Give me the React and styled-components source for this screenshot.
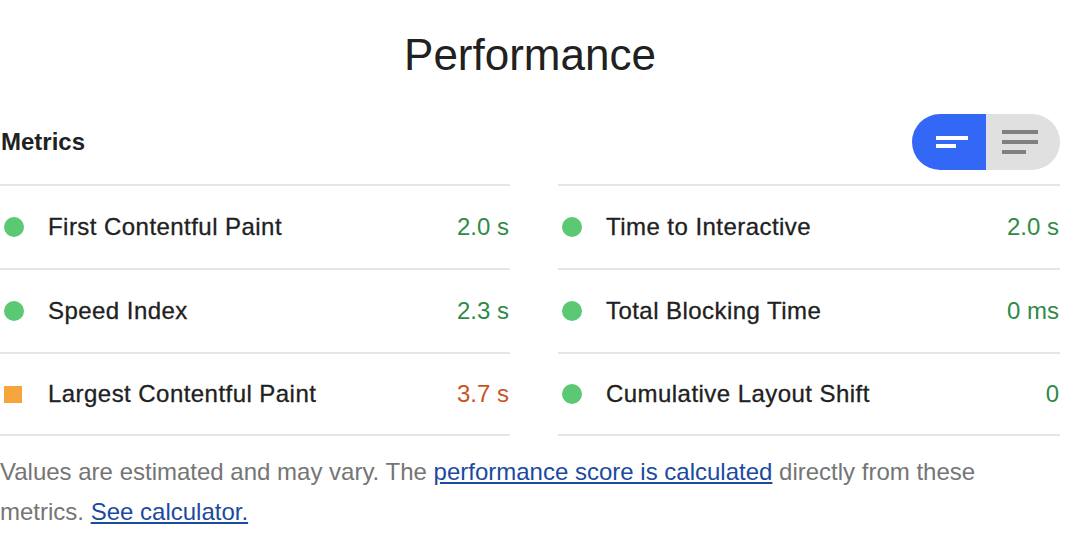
import React from 'react'
import styled, { createGlobalStyle } from 'styled-components'

const GlobalStyle = createGlobalStyle`
  body {
    margin: 0;
    background: #fff;
    font-family: "Liberation Sans", Arial, Helvetica, sans-serif;
    color: #212121;
  }
`

const metrics = [
  { title: 'First Contentful Paint', value: '2.0 s', rating: 'pass' },
  { title: 'Time to Interactive', value: '2.0 s', rating: 'pass' },
  { title: 'Speed Index', value: '2.3 s', rating: 'pass' },
  { title: 'Total Blocking Time', value: '0 ms', rating: 'pass' },
  { title: 'Largest Contentful Paint', value: '3.7 s', rating: 'average' },
  { title: 'Cumulative Layout Shift', value: '0', rating: 'pass' },
]

const valueColors = {
  pass: '#2f8a48',
  average: '#c9531f',
}

const Metric = ({ item }) => (
  <Row>
    {item.rating === 'pass' ? <Dot /> : <Square />}
    <Title>{item.title}</Title>
    <Value $rating={item.rating}>{item.value}</Value>
  </Row>
)

const App = () => (
  <>
    <GlobalStyle />
    <Page>
      <Heading>Performance</Heading>
      <Header>
        <SubTitle>Metrics</SubTitle>
        <Toggle>
          <ToggleHalf $active>
            <svg width="74" height="56" viewBox="0 0 74 56">
              <rect x="24" y="22" width="32" height="4" fill="#fff" />
              <rect x="24" y="30" width="20" height="4" fill="#fff" />
            </svg>
          </ToggleHalf>
          <ToggleHalf>
            <svg width="74" height="56" viewBox="0 0 74 56">
              <rect x="16" y="16" width="36" height="4" fill="#808080" />
              <rect x="16" y="26" width="36" height="4" fill="#808080" />
              <rect x="16" y="36" width="24" height="4" fill="#808080" />
            </svg>
          </ToggleHalf>
        </Toggle>
      </Header>
      <Grid>
        {metrics.map((item) => (
          <Metric key={item.title} item={item} />
        ))}
      </Grid>
      <Footer>
        Values are estimated and may vary. The{' '}
        <Link href="#">performance score is calculated</Link> directly from these
        metrics. <Link href="#">See calculator.</Link>
      </Footer>
    </Page>
  </>
)

export default App

const Page = styled.div`
  width: 1060px;
`

const Heading = styled.h1`
  margin: 0;
  padding-top: 31px;
  text-align: center;
  font-size: 44px;
  line-height: 48px;
  font-weight: 400;
  color: #212121;
`

const Header = styled.div`
  display: flex;
  align-items: center;
  justify-content: space-between;
  margin: 35px 0 14px;
`

const SubTitle = styled.div`
  font-size: 24px;
  font-weight: 700;
  padding-left: 1px;
  color: #212121;
`

const Toggle = styled.div`
  display: flex;
  height: 56px;
  border-radius: 28px;
  overflow: hidden;
`

const ToggleHalf = styled.div`
  width: 74px;
  height: 56px;
  background: ${(props) => (props.$active ? '#3367f6' : '#e0e0e0')};
  svg {
    display: block;
  }
`

const Grid = styled.div`
  display: grid;
  grid-template-columns: 510px 1fr;
  column-gap: 48px;
`

const Row = styled.div`
  display: flex;
  align-items: center;
  height: 82px;
  border-top: 2px solid #e6e6e6;
  &:nth-last-child(-n + 2) {
    border-bottom: 2px solid #e6e6e6;
    height: 80px;
  }
`

const Dot = styled.span`
  width: 20px;
  height: 20px;
  border-radius: 50%;
  margin-left: 4px;
  background: #5bc973;
  flex-shrink: 0;
`

const Square = styled.span`
  width: 18px;
  height: 17px;
  margin: 0 2px 0 4px;
  background: #f5a53b;
  flex-shrink: 0;
`

const Title = styled.div`
  flex: 1;
  margin-left: 24px;
  font-size: 24px;
  letter-spacing: 0.45px;
  -webkit-text-stroke: 0.3px #212121;
  color: #212121;
`

const Value = styled.div`
  font-size: 24px;
  padding-right: 1px;
  color: ${(props) => valueColors[props.$rating]};
`

const Footer = styled.p`
  margin: 16px 0 0;
  font-size: 24px;
  line-height: 40px;
  color: #757575;
`

const Link = styled.a`
  color: #1b4aa1;
  text-decoration: underline;
`
